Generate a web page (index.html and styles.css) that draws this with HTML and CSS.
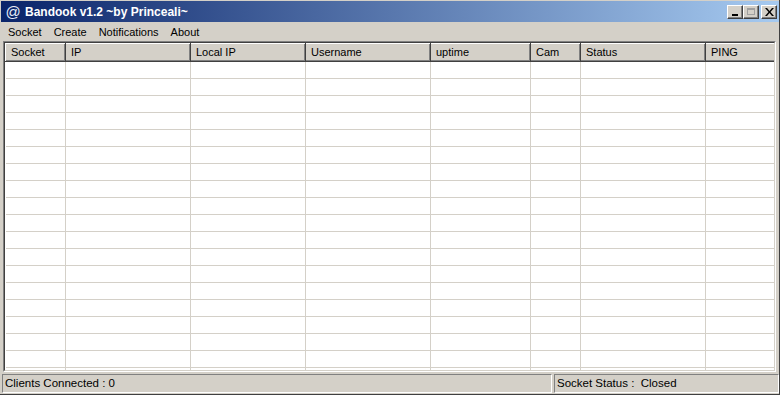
FILE: index.html
```html
<!doctype html>
<html lang="en">
<head>
  <meta charset="UTF-8">
  <title>Bandook v1.2 ~by Princeali~</title>
  <link rel="stylesheet" href="styles.css">
</head>
<body>
  <div class="window">
    <div class="titlebar">
      <span class="app-icon">@</span>
      <span class="title">Bandook v1.2 ~by Princeali~</span>
      <div class="caption-btns">
        <div class="cbtn cbtn-min"><span class="min-bar"></span></div>
        <div class="cbtn cbtn-max"><span class="max-box"></span></div>
        <div class="cbtn cbtn-close">
          <svg width="9" height="8" viewBox="0 0 9 8"><path d="M0 0h2l2.5 3 2.5-3h2l-3.5 4 3.5 4h-2l-2.5-3-2.5 3h-2l3.5-4z" fill="#000"/></svg>
        </div>
      </div>
    </div>

    <div class="menubar">
      <span class="menu-item">Socket</span>
      <span class="menu-item">Create</span>
      <span class="menu-item">Notifications</span>
      <span class="menu-item">About</span>
    </div>

    <div class="listview">
      <div class="list-inner">
        <table class="grid">
          <colgroup>
            <col style="width:60px">
            <col style="width:125px">
            <col style="width:115px">
            <col style="width:125px">
            <col style="width:100px">
            <col style="width:50px">
            <col style="width:125px">
            <col style="width:70px">
          </colgroup>
          <thead>
            <tr>
              <th>Socket</th>
              <th>IP</th>
              <th>Local IP</th>
              <th>Username</th>
              <th>uptime</th>
              <th>Cam</th>
              <th>Status</th>
              <th>PING</th>
            </tr>
          </thead>
          <tbody id="rows"></tbody>
        </table>
      </div>
    </div>

    <div class="statusbar">
      <div class="panel panel-clients">Clients Connected : 0</div>
      <div class="panel panel-socket">Socket Status :&nbsp; Closed</div>
    </div>
  </div>

  <script>
    var body = document.getElementById('rows');
    for (var i = 0; i < 19; i++) {
      var tr = document.createElement('tr');
      for (var j = 0; j < 8; j++) {
        tr.appendChild(document.createElement('td'));
      }
      body.appendChild(tr);
    }
  </script>
</body>
</html>
```

FILE: styles.css
```css
body {
    margin: 0;
    font-family: "Liberation Sans", Arial, sans-serif;
    font-size: 11px;
    background: #d4d0c8;
}

.window {
    width: 780px;
    height: 395px;
    display: flex;
    flex-direction: column;
    background: #d4d0c8;
    box-sizing: border-box;
    border-right: 1px solid #404040;
    border-bottom: 1px solid #404040;
    overflow: hidden;
}

.titlebar {
    height: 22px;
    flex: none;
    display: flex;
    align-items: center;
    padding: 0 2px 0 4px;
    background: linear-gradient(to right, #0a246a, #a6caf0);
    color: #fff;
    box-sizing: border-box;
    border-top: 1px solid #d4d0c8;
    border-left: 1px solid #d4d0c8;
}

.app-icon {
    width: 16px;
    font-size: 15px;
    line-height: 16px;
    text-align: center;
    color: #e8ecf8;
    margin-right: 4px;
}

.title {
    font-weight: bold;
    font-size: 12px;
    flex: 1;
}

.caption-btns {
    display: flex;
    align-items: center;
}

.cbtn {
    width: 16px;
    height: 14px;
    box-sizing: border-box;
    background: #d4d0c8;
    border-top: 1px solid #fff;
    border-left: 1px solid #fff;
    border-right: 1px solid #404040;
    border-bottom: 1px solid #404040;
    box-shadow: inset -1px -1px 0 #808080;
    display: flex;
    align-items: center;
    justify-content: center;
}

.cbtn-close {
    margin-left: 2px;
}

.min-bar {
    width: 6px;
    height: 2px;
    background: #000;
    margin-top: 6px;
}

.max-box {
    width: 8px;
    height: 7px;
    box-sizing: border-box;
    border: 1px solid #a0a0a0;
    border-top-width: 2px;
}

.menubar {
    height: 19px;
    flex: none;
    display: flex;
    align-items: center;
    padding-left: 2px;
    font-size: 11px;
}

.menu-item {
    padding: 0 6px;
    color: #000;
}

.listview {
    flex: 1;
    margin: 0 3px 2px 3px;
    border-top: 1px solid #808080;
    border-left: 1px solid #808080;
    border-right: 1px solid #fff;
    border-bottom: 1px solid #fff;
    overflow: hidden;
}

.list-inner {
    height: 100%;
    border-top: 1px solid #404040;
    border-left: 1px solid #404040;
    border-right: 1px solid #d4d0c8;
    border-bottom: 1px solid #d4d0c8;
    box-sizing: border-box;
    background: #fff;
    overflow: hidden;
}

.grid {
    border-collapse: collapse;
    table-layout: fixed;
    width: 770px;
}

.grid th {
    height: 18px;
    padding: 0 0 1px 5px;
    text-align: left;
    font-weight: normal;
    background: #d4d0c8;
    box-sizing: border-box;
    border-top: 1px solid #fff;
    border-left: 1px solid #fff;
    border-right: 1px solid #404040;
    border-bottom: 1px solid #404040;
    box-shadow: inset -1px -1px 0 #808080;
    color: #000;
}

.grid td {
    height: 17px;
    padding: 0;
    box-sizing: border-box;
    border-right: 1px solid #d4d0c8;
    border-bottom: 1px solid #d4d0c8;
}

.statusbar {
    height: 19px;
    flex: none;
    display: flex;
    gap: 2px;
    padding: 0 0 1px 2px;
    font-size: 11.5px;
}

.panel {
    box-sizing: border-box;
    border-top: 1px solid #808080;
    border-left: 1px solid #808080;
    border-right: 1px solid #fff;
    border-bottom: 1px solid #fff;
    padding: 0 0 0 2px;
    line-height: 17px;
    color: #000;
}

.panel-clients {
    width: 550px;
}

.panel-socket {
    flex: 1;
}
```
